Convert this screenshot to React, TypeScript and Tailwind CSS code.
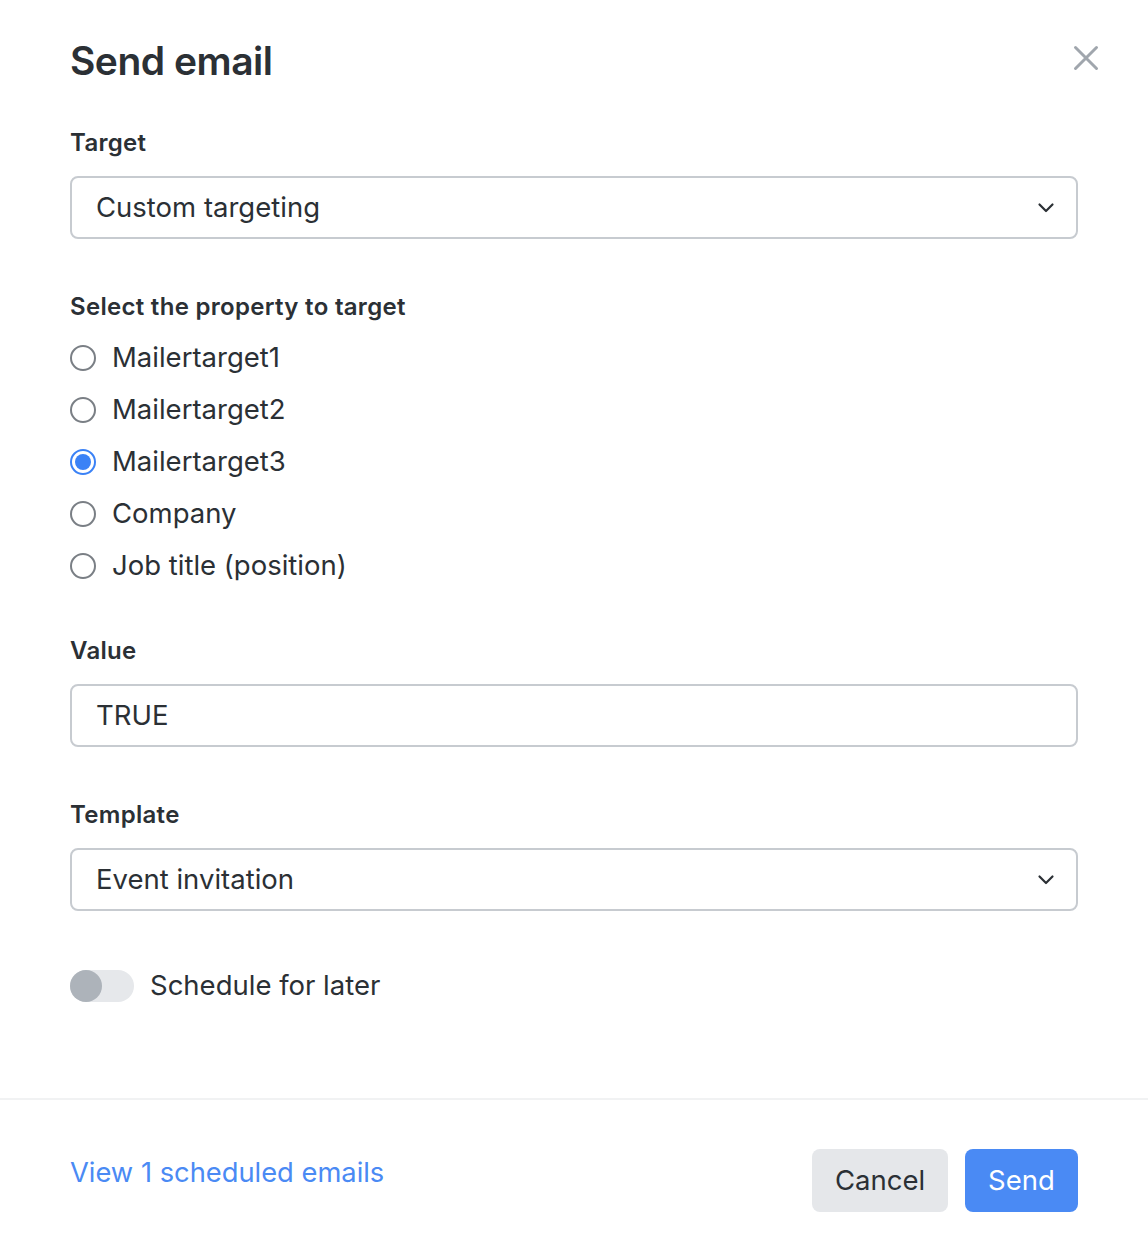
import React from "react";

const font = { fontFamily: "Inter, 'Noto Sans', 'Liberation Sans', sans-serif" };

function Chevron() {
  return (
    <svg width="20" height="20" viewBox="0 0 20 20" fill="none" className="shrink-0">
      <path d="M3.5 6.5 L10 13 L16.5 6.5" stroke="#2b3035" strokeWidth="2.2" strokeLinecap="round" strokeLinejoin="round" />
    </svg>
  );
}

function Radio({ label, checked }: { label: string; checked?: boolean }) {
  return (
    <label className="flex h-[52px] items-center gap-[16px]">
      {checked ? (
        <span className="flex h-[26px] w-[26px] items-center justify-center rounded-full border-2 border-[#3b82f6] bg-white">
          <span className="h-[16px] w-[16px] rounded-full bg-[#3b82f6]" />
        </span>
      ) : (
        <span className="h-[26px] w-[26px] rounded-full border-2 border-[#7a7f85] bg-white" />
      )}
      <span className="text-[27.5px] text-[#2b3035]">{label}</span>
    </label>
  );
}

export default function App() {
  return (
    <div className="min-h-[1254px] w-full bg-white" style={font}>
      <div className="px-[70px] pt-[37px]">
        <div className="flex items-start justify-between">
          <h1 className="text-[39px] font-semibold leading-[48px] tracking-[-0.5px] text-[#2b3035]">Send email</h1>
          <svg width="26" height="26" viewBox="0 0 26 26" className="mr-[-21px] mt-[8px]">
            <path d="M2.5 2.5 L23.5 23.5 M23.5 2.5 L2.5 23.5" stroke="#a0a6ad" strokeWidth="3" strokeLinecap="round" />
          </svg>
        </div>

        <div className="mt-[43px] text-[24px] font-semibold leading-[30px] tracking-[0.3px] text-[#2b3035]">Target</div>
        <div className="mt-[18px] flex h-[63px] items-center justify-between rounded-[8px] border-2 border-[#c7cbd0] pl-[24px] pr-[20px]">
          <span className="text-[27.5px] text-[#2b3035]">Custom targeting</span>
          <Chevron />
        </div>

        <div className="mt-[53px] text-[24px] font-semibold leading-[30px] tracking-[0.3px] text-[#2b3035]">Select the property to target</div>
        <div className="mt-[10px] flex flex-col">
          <Radio label="Mailertarget1" />
          <Radio label="Mailertarget2" />
          <Radio label="Mailertarget3" checked />
          <Radio label="Company" />
          <Radio label="Job title (position)" />
        </div>

        <div className="mt-[44px] text-[24px] font-semibold leading-[30px] tracking-[0.3px] text-[#2b3035]">Value</div>
        <div className="mt-[18px] flex h-[63px] items-center rounded-[8px] border-2 border-[#c7cbd0] pl-[24px]">
          <span className="text-[27.5px] text-[#2b3035]">TRUE</span>
        </div>

        <div className="mt-[53px] text-[24px] font-semibold leading-[30px] tracking-[0.3px] text-[#2b3035]">Template</div>
        <div className="mt-[18px] flex h-[63px] items-center justify-between rounded-[8px] border-2 border-[#c7cbd0] pl-[24px] pr-[20px]">
          <span className="text-[27.5px] text-[#2b3035]">Event invitation</span>
          <Chevron />
        </div>

        <div className="mt-[57px] flex h-[36px] items-center gap-[16px]">
          <span className="relative h-[32px] w-[64px] rounded-full bg-[#e6e8eb]">
            <span className="absolute left-0 top-0 h-[32px] w-[32px] rounded-full bg-[#adb3ba]" />
          </span>
          <span className="text-[27.5px] text-[#2b3035]">Schedule for later</span>
        </div>
      </div>

      <div className="mt-[94px] h-[2px] w-full bg-[#f1f2f3]" />

      <div className="flex items-center justify-between px-[70px] pt-[49px]">
        <a className="-mt-[14px] text-[27.3px] text-[#4a8af4]">View 1 scheduled emails</a>
        <div className="flex gap-[17px]">
          <button className="h-[63px] w-[136px] rounded-[8px] bg-[#e5e7ea] text-[27.5px] text-[#2b3035]">Cancel</button>
          <button className="h-[63px] w-[113px] rounded-[8px] bg-[#4a8af4] text-[27.5px] text-white">Send</button>
        </div>
      </div>
    </div>
  );
}
